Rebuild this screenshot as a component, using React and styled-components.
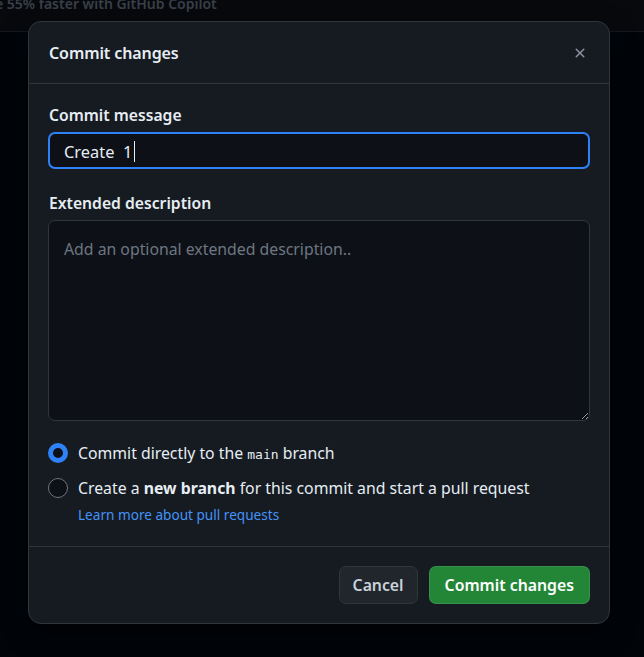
import React from "react";
import styled, { createGlobalStyle } from "styled-components";

const Global = createGlobalStyle`
  html, body { margin: 0; padding: 0; }
  body {
    background: #010409;
    font-family: "Noto Sans", "Segoe UI", sans-serif;
    color: #e6edf3;
    width: 644px;
    height: 657px;
    overflow: hidden;
  }
`;

const Page = styled.div`
  position: relative;
  width: 644px;
  height: 657px;
`;

const Banner = styled.div`
  height: 31px;
  border-bottom: 1px solid #14181e;
  background: #07090d;
  overflow: hidden;
`;

const BannerText = styled.div`
  margin: -6px 0 0 -5px;
  font-size: 14px;
  font-weight: 600;
  color: #3a4049;
  white-space: nowrap;
`;

const Dialog = styled.div`
  position: absolute;
  left: 28px;
  top: 21px;
  width: 580px;
  height: 601px;
  display: flex;
  flex-direction: column;
  background: #161b22;
  border: 1px solid #30363d;
  border-radius: 13px;
  box-shadow: 0 8px 24px rgba(0, 0, 0, 0.55);
`;

const Header = styled.div`
  height: 61px;
  display: flex;
  align-items: center;
  justify-content: space-between;
  padding: 0 20px;
  border-bottom: 1px solid #30363d;
`;

const Title = styled.h1`
  margin: 0;
  font-size: 16px;
  font-weight: 600;
  color: #e6edf3;
  letter-spacing: -0.1px;
`;

const CloseButton = styled.button`
  width: 24px;
  height: 24px;
  margin-right: -3px;
  padding: 0;
  display: flex;
  align-items: center;
  justify-content: center;
  border: 0;
  background: transparent;
  color: #8b949e;
`;

const Body = styled.div`
  flex: 1;
  padding: 19px 19px 0 19px;
  display: flex;
  flex-direction: column;
`;

const Label = styled.div`
  font-size: 15.7px;
  font-weight: 600;
  line-height: 24px;
  color: #e6edf3;
  margin: ${(p) => p.$mt || 0}px 0 5px 1px;
`;

const TextField = styled.div`
  box-sizing: border-box;
  height: 37px;
  border: 2px solid #2f81f7;
  border-radius: 7px;
  background: #0d1117;
  display: flex;
  align-items: center;
  padding: 1px 14px 0;
  font-size: 16.4px;
  color: #e6edf3;
  white-space: pre;
`;

const Caret = styled.span`
  display: inline-block;
  width: 1px;
  height: 21px;
  margin-left: 2px;
  background: #e6edf3;
`;

const Description = styled.textarea`
  box-sizing: border-box;
  height: 201px;
  margin: 0;
  border: 1px solid #30363d;
  border-radius: 7px;
  background: #0d1117;
  padding: 17px 15px;
  font-family: "Noto Sans", "Segoe UI", sans-serif;
  font-size: 15.8px;
  color: #e6edf3;
  outline: none;
  resize: vertical;
  color-scheme: dark;
  &::placeholder { color: #6e7681; }
`;

const Options = styled.div`
  margin-top: 20px;
  display: flex;
  flex-direction: column;
  gap: 9px;
`;

const Option = styled.div`
  display: grid;
  grid-template-columns: 20px 1fr;
  column-gap: 10px;
  align-items: start;
`;

const Radio = styled.span`
  box-sizing: border-box;
  width: 20px;
  height: 20px;
  margin-top: 2px;
  border-radius: 50%;
  background: #0d1117;
  border: ${(p) => (p.$checked ? "5px solid #2f81f7" : "1px solid #6e7681")};
`;

const OptionText = styled.div`
  font-size: 15.8px;
  line-height: 24px;
  color: #e6edf3;
  strong { font-weight: 700; }
`;

const Code = styled.code`
  font-family: "DejaVu Sans Mono", "Liberation Mono", monospace;
  font-size: 13px;
  font-weight: 400;
`;

const HelpLink = styled.a`
  display: block;
  margin-top: 5px;
  font-size: 13.6px;
  line-height: 20px;
  color: #4493f8;
  text-decoration: none;
`;

const Footer = styled.div`
  height: 76px;
  border-top: 1px solid #30363d;
  display: flex;
  align-items: center;
  justify-content: flex-end;
  gap: 11px;
  padding: 0 19px;
`;

const Button = styled.button`
  height: 38px;
  padding: 0 ${(p) => (p.$primary ? 15 : 13)}px;
  border-radius: 7px;
  font-family: "Noto Sans", "Segoe UI", sans-serif;
  font-size: 15.8px;
  font-weight: 600;
  border: 1px solid ${(p) => (p.$primary ? "rgba(240,246,252,0.1)" : "#30363d")};
  background: ${(p) => (p.$primary ? "#238636" : "#21262d")};
  color: ${(p) => (p.$primary ? "#ffffff" : "#c9d1d9")};
`;

export default function App() {
  return (
    <Page>
      <Global />
      <Banner>
        <BannerText>e 55% faster with GitHub Copilot</BannerText>
      </Banner>
      <Dialog>
        <Header>
          <Title>Commit changes</Title>
          <CloseButton aria-label="Close">
            <svg width="16" height="16" viewBox="0 0 16 16" fill="currentColor">
              <path d="M3.72 3.72a.75.75 0 0 1 1.06 0L8 6.94l3.22-3.22a.749.749 0 0 1 1.275.326.749.749 0 0 1-.215.734L9.06 8l3.22 3.22a.749.749 0 0 1-.326 1.275.749.749 0 0 1-.734-.215L8 9.06l-3.22 3.22a.751.751 0 0 1-1.042-.018.751.751 0 0 1-.018-1.042L6.94 8 3.72 4.78a.75.75 0 0 1 0-1.06Z" />
            </svg>
          </CloseButton>
        </Header>
        <Body>
          <Label>Commit message</Label>
          <TextField>
            Create  1<Caret />
          </TextField>
          <Label $mt={22}>Extended description</Label>
          <Description placeholder="Add an optional extended description.." />
          <Options>
            <Option>
              <Radio $checked />
              <OptionText>
                Commit directly to the <Code>main</Code> branch
              </OptionText>
            </Option>
            <Option>
              <Radio />
              <OptionText>
                Create a <strong>new branch</strong> for this commit and start a pull request
                <HelpLink href="#">Learn more about pull requests</HelpLink>
              </OptionText>
            </Option>
          </Options>
        </Body>
        <Footer>
          <Button>Cancel</Button>
          <Button $primary>Commit changes</Button>
        </Footer>
      </Dialog>
    </Page>
  );
}
